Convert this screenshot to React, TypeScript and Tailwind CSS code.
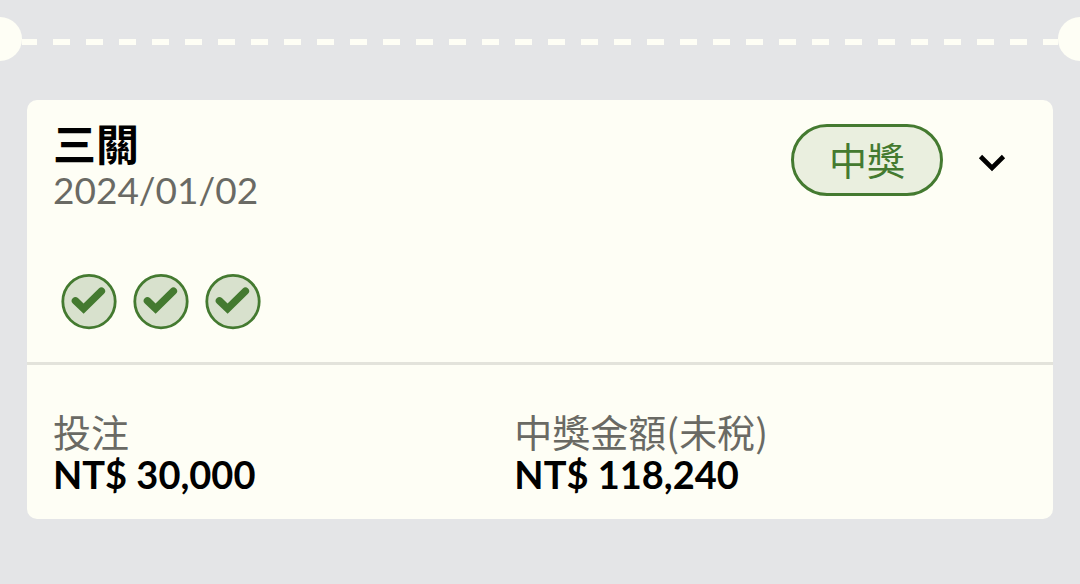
const LEGS = ["第一關", "第二關", "第三關"];

const AMOUNTS = [
  { label: "投注", value: "NT$ 30,000" },
  { label: "中獎金額(未稅)", value: "NT$ 118,240" },
];

function TicketDivider() {
  return (
    <div className="flex items-start pt-[17px]" aria-hidden="true">
      <div className="h-11 w-[22px] rounded-r-full bg-[#fefef5]" />
      <div className="mt-[22px] h-[6px] flex-1 bg-[repeating-linear-gradient(90deg,#fefef5_0px_15px,transparent_15px_31px,#fefef5_31px_33px)]" />
      <div className="h-11 w-[22px] rounded-l-full bg-[#fefef5]" />
    </div>
  );
}

function WonLeg({ label }: { label: string }) {
  return (
    <li>
      <svg className="size-[56px]" viewBox="0 0 56 56" role="img" aria-label={label}>
        <circle cx="28" cy="27.6" r="26.2" fill="#d8e1cd" stroke="#447a30" strokeWidth="2.8" />
        <path
          d="M14.4 26.8L22.6 34.6L40.4 17.2"
          fill="none"
          stroke="#447a30"
          strokeWidth="7.4"
          strokeLinecap="round"
          strokeLinejoin="miter"
        />
      </svg>
    </li>
  );
}

export default function App() {
  return (
    <main className="min-h-screen bg-[#e4e5e7] font-['Lato','Noto_Sans_CJK_TC',sans-serif] text-black">
      <TicketDivider />
      <article className="mx-[27px] mt-[39px] overflow-hidden rounded-[10px] bg-[#fefef5]">
        <div className="border-b-[3px] border-[#e3e3db] px-[26px] pt-6 pb-8">
          <header className="flex items-start justify-between">
            <div>
              <h2 className="text-[43px] leading-[42px] font-bold">三關</h2>
              <p className="text-[37px] leading-[48px] text-[#6a6a64]">2024/01/02</p>
            </div>
            <div className="flex items-center gap-[30px] pr-4">
              <span className="flex h-[72px] items-center rounded-full border-[3px] border-[#447a30] bg-[#eaefdf] px-[35px] text-[38px] leading-none text-[#447a30]">
                中獎
              </span>
              <button type="button" aria-label="展開" className="flex size-[38px] items-center justify-center">
                <svg className="h-6 w-7" viewBox="0 0 28 24" fill="none" aria-hidden="true">
                  <path d="M2.5 8.5L14 20L25.5 8.5" stroke="black" strokeWidth="4.6" />
                </svg>
              </button>
            </div>
          </header>
          <ul className="mt-[60px] flex gap-4 pl-2">
            {LEGS.map((label) => (
              <WonLeg key={label} label={label} />
            ))}
          </ul>
        </div>
        <dl className="grid grid-cols-[9fr_10fr] px-[26px] pt-[47px] pb-5">
          {AMOUNTS.map(({ label, value }) => (
            <div key={label}>
              <dt className="font-['Noto_Sans_CJK_TC',sans-serif] text-[38px] leading-[38px] text-[#6a6a64]">{label}</dt>
              <dd className="text-[38px] leading-[49px] font-bold">{value}</dd>
            </div>
          ))}
        </dl>
      </article>
    </main>
  );
}
